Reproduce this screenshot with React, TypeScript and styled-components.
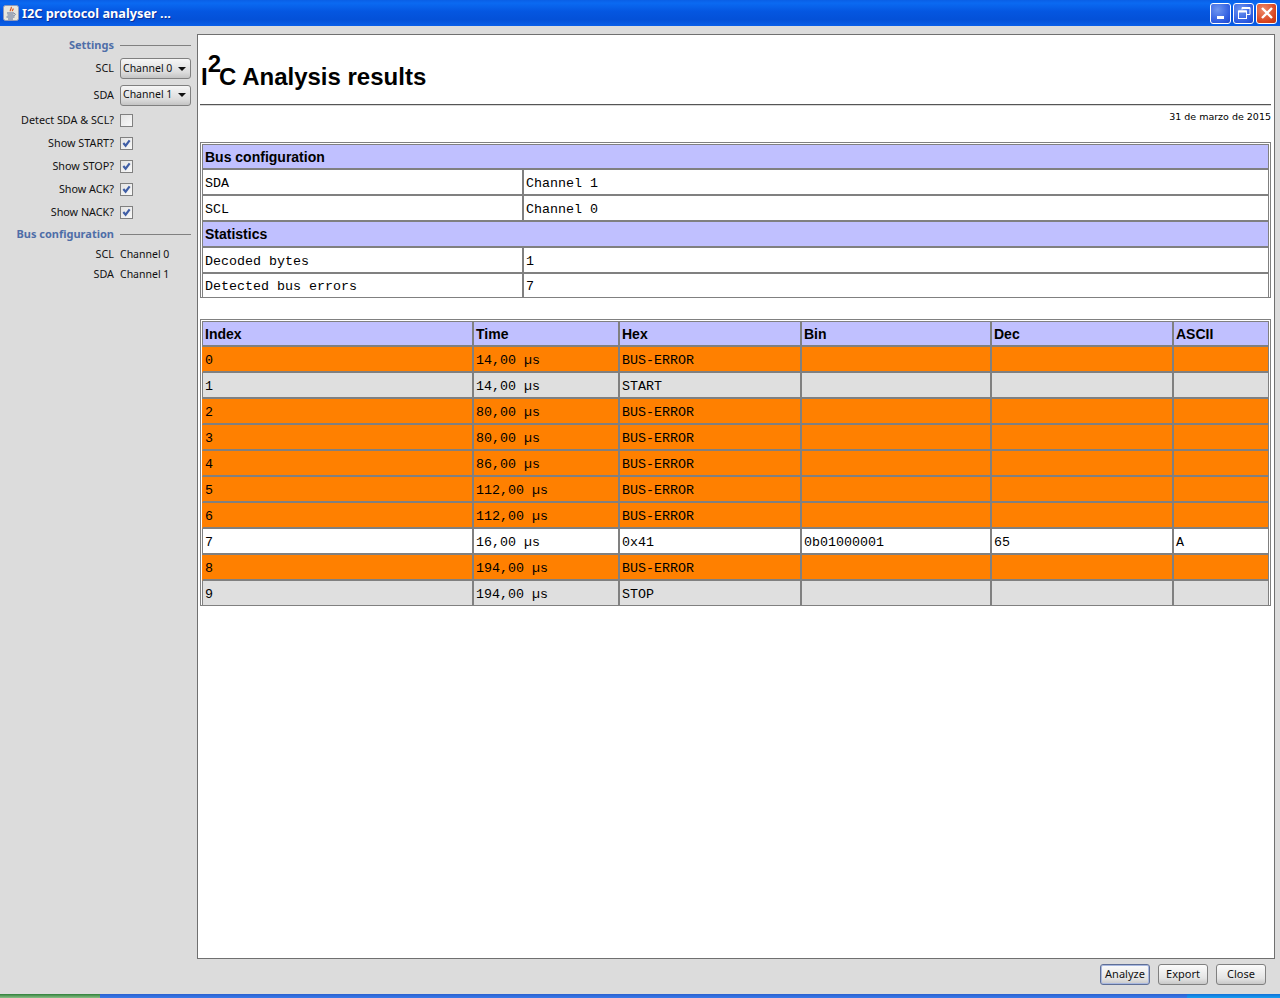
import React from "react"
import styled, { createGlobalStyle, css } from "styled-components"

const Global = createGlobalStyle`
  html, body {
    margin: 0;
    height: 100%;
    overflow: hidden;
    background: #dcdcdc;
  }
  #root {
    height: 100%;
  }
`

const busRows = [
  ["SDA", "Channel 1"],
  ["SCL", "Channel 0"],
]
const statRows = [
  ["Decoded bytes", "1"],
  ["Detected bus errors", "7"],
]
const columns = [
  { name: "Index", width: 272 },
  { name: "Time", width: 146 },
  { name: "Hex", width: 182 },
  { name: "Bin", width: 190 },
  { name: "Dec", width: 182 },
  { name: "ASCII", width: 95 },
]

type Kind = "error" | "event" | "data"
const rows: { kind: Kind; cells: string[] }[] = [
  { kind: "error", cells: ["0", "14,00 µs", "BUS-ERROR", "", "", ""] },
  { kind: "event", cells: ["1", "14,00 µs", "START", "", "", ""] },
  { kind: "error", cells: ["2", "80,00 µs", "BUS-ERROR", "", "", ""] },
  { kind: "error", cells: ["3", "80,00 µs", "BUS-ERROR", "", "", ""] },
  { kind: "error", cells: ["4", "86,00 µs", "BUS-ERROR", "", "", ""] },
  { kind: "error", cells: ["5", "112,00 µs", "BUS-ERROR", "", "", ""] },
  { kind: "error", cells: ["6", "112,00 µs", "BUS-ERROR", "", "", ""] },
  { kind: "data", cells: ["7", "16,00 µs", "0x41", "0b01000001", "65", "A"] },
  { kind: "error", cells: ["8", "194,00 µs", "BUS-ERROR", "", "", ""] },
  { kind: "event", cells: ["9", "194,00 µs", "STOP", "", "", ""] },
]

const rowColors: Record<Kind, string> = {
  error: "#ff8000",
  event: "#dfdfdf",
  data: "#ffffff",
}

const JavaIcon = () => (
  <svg width="16" height="16" viewBox="0 0 16 16">
    <rect x="0.5" y="0.5" width="15" height="15" rx="2" fill="#e8e6dc" stroke="#8f98b8" />
    <path d="M8 2c1.5 1.6-1.6 2.6-.6 4.2M10 3.5c.8 1-1.2 1.6-.6 2.8" fill="none" stroke="#d9541e" strokeWidth="1.2" />
    <path d="M4 8h7M4.5 10h6M3.5 12h8M5 14h5" stroke="#5a6f96" strokeWidth="1" />
    <path d="M11 8.5c2 0 2 2-.5 2" fill="none" stroke="#5a6f96" strokeWidth="0.8" />
  </svg>
)

const Check = () => (
  <svg width="9" height="9" viewBox="0 0 10 10">
    <path d="M1.5 4.5 4 7.5 8.5 1.5" fill="none" stroke="#3f5ea6" strokeWidth="2.4" />
  </svg>
)

const App: React.FC = () => {
  return (
    <>
      <Global />
      <S.Window>
        <S.TitleBar>
          <JavaIcon />
          <S.Title>I2C protocol analyser ...</S.Title>
          <S.WindowButtons>
            <S.WindowButton>
              <svg width="12" height="12" viewBox="0 0 12 12">
                <rect x="2" y="9" width="7" height="3" fill="#fff" />
              </svg>
            </S.WindowButton>
            <S.WindowButton>
              <svg width="14" height="14" viewBox="0 0 14 14" fill="none" stroke="#fff">
                <rect x="1.5" y="5" width="8" height="7.5" strokeWidth="1" />
                <path d="M1.5 5.5h8" strokeWidth="2" />
                <path d="M5 3.5V1.5h8v7h-3" strokeWidth="1" />
                <path d="M5 2h8" strokeWidth="2" />
              </svg>
            </S.WindowButton>
            <S.WindowButton $close>
              <svg width="14" height="14" viewBox="0 0 14 14">
                <path d="M2 2l10 10M12 2 2 12" stroke="#fff" strokeWidth="2.4" />
              </svg>
            </S.WindowButton>
          </S.WindowButtons>
        </S.TitleBar>

        <S.Main>
          <S.Sidebar>
            <S.SectionHead>
              <S.SectionLabel>Settings</S.SectionLabel>
              <S.SectionLine />
            </S.SectionHead>
            <S.Row $h={27}>
              <S.Label>SCL</S.Label>
              <S.Combo>Channel 0<S.Arrow /></S.Combo>
            </S.Row>
            <S.Row $h={26}>
              <S.Label>SDA</S.Label>
              <S.Combo>Channel 1<S.Arrow /></S.Combo>
            </S.Row>
            <S.Row $h={24}>
              <S.Label>Detect SDA &amp; SCL?</S.Label>
              <S.CheckBox />
            </S.Row>
            {["Show START?", "Show STOP?", "Show ACK?", "Show NACK?"].map((label) => (
              <S.Row $h={23} key={label}>
                <S.Label>{label}</S.Label>
                <S.CheckBox><Check /></S.CheckBox>
              </S.Row>
            ))}
            <S.SectionHead>
              <S.SectionLabel>Bus configuration</S.SectionLabel>
              <S.SectionLine />
            </S.SectionHead>
            <S.Row $h={20}>
              <S.Label>SCL</S.Label>
              <S.Value>Channel 0</S.Value>
            </S.Row>
            <S.Row $h={20}>
              <S.Label>SDA</S.Label>
              <S.Value>Channel 1</S.Value>
            </S.Row>
          </S.Sidebar>

          <S.Report>
            <S.Heading>I<S.Sup>2</S.Sup>C Analysis results</S.Heading>
            <S.Rule />
            <S.DateLine>31 de marzo de 2015</S.DateLine>

            <S.SummaryTable>
              <colgroup>
                <S.Col $w={322} />
                <S.Col $w={745} />
              </colgroup>
              <tbody>
                <tr><S.HeadCell colSpan={2}>Bus configuration</S.HeadCell></tr>
                {busRows.map(([name, value]) => (
                  <tr key={name}>
                    <S.Cell $bg="#ffffff">{name}</S.Cell>
                    <S.Cell $bg="#ffffff">{value}</S.Cell>
                  </tr>
                ))}
                <tr><S.HeadCell colSpan={2}>Statistics</S.HeadCell></tr>
                {statRows.map(([name, value]) => (
                  <tr key={name}>
                    <S.Cell $bg="#ffffff">{name}</S.Cell>
                    <S.Cell $bg="#ffffff">{value}</S.Cell>
                  </tr>
                ))}
              </tbody>
            </S.SummaryTable>

            <S.DataTable>
              <colgroup>
                {columns.map((c) => <S.Col key={c.name} $w={c.width} />)}
              </colgroup>
              <tbody>
                <tr>
                  {columns.map((c) => <S.HeadCell key={c.name}>{c.name}</S.HeadCell>)}
                </tr>
                {rows.map((r) => (
                  <tr key={r.cells[0]}>
                    {r.cells.map((text, i) => (
                      <S.Cell key={i} $bg={rowColors[r.kind]} $edge={r.kind === "error"}>{text}</S.Cell>
                    ))}
                  </tr>
                ))}
              </tbody>
            </S.DataTable>
          </S.Report>
        </S.Main>

        <S.Footer>
          <S.Button $focused>Analyze</S.Button>
          <S.Button>Export</S.Button>
          <S.Button>Close</S.Button>
        </S.Footer>

        <S.Taskbar>
          <S.StartButton />
          <S.TaskArea />
          <S.Tray />
        </S.Taskbar>
      </S.Window>
    </>
  )
}

const uiFont = `"Noto Sans", "DejaVu Sans", sans-serif`

const tableBase = css`
  width: 1071px;
  table-layout: fixed;
  border-collapse: separate;
  border-spacing: 0;
  border: 1px solid #808080;
  padding: 1px 1px 0;
  box-sizing: border-box;

  tr:first-child td {
    border-top: 1px solid #808080;
    padding-top: 1px;
    line-height: 22px;
  }
  tr:last-child td {
    border-bottom: 0;
  }
  td:last-child {
    border-right-width: 1px;
  }
`

const cellBase = css`
  padding: 1px 2px 0;
  border-right: 2px solid #808080;
  border-bottom: 2px solid #808080;
  color: #000;
  line-height: 23px;
  white-space: nowrap;
  overflow: hidden;
`

const S = {
  Window: styled.div`
    height: 100%;
    display: flex;
    flex-direction: column;
    background: #dcdcdc;
    font-family: ${uiFont};
    font-size: 10.5px;
    color: #111;
  `,
  TitleBar: styled.div`
    height: 26px;
    flex: none;
    display: flex;
    align-items: center;
    gap: 3px;
    padding: 0 3px;
    box-sizing: border-box;
    background: linear-gradient(#0a5fe6 0%, #0a6af2 12%, #0556e0 45%, #0451d8 75%, #0a5fe8 100%);
  `,
  Title: styled.div`
    flex: 1;
    color: #fff;
    font-family: "Noto Sans", sans-serif;
    font-weight: bold;
    font-size: 12.75px;
    text-shadow: 1px 1px 0 #0a2f9a;
  `,
  WindowButtons: styled.div`
    display: flex;
    gap: 2px;
  `,
  WindowButton: styled.div<{ $close?: boolean }>`
    width: 21px;
    height: 21px;
    box-sizing: border-box;
    display: flex;
    align-items: center;
    justify-content: center;
    border: 1px solid #fff;
    border-radius: 3px;
    background: ${(p) =>
      p.$close
        ? "radial-gradient(circle at 35% 30%, #ee8a6a, #d8421c 70%, #c03510)"
        : "radial-gradient(circle at 35% 30%, #6f96f0, #2d5be0 70%, #1f45c8)"};
  `,
  Main: styled.div`
    flex: 1;
    min-height: 0;
    display: flex;
    padding-top: 8px;
  `,
  Sidebar: styled.div`
    width: 197px;
    flex: none;
    padding-top: 1px;
    box-sizing: border-box;
  `,
  SectionHead: styled.div`
    height: 20px;
    display: grid;
    grid-template-columns: 114px 71px;
    column-gap: 6px;
    align-items: center;
  `,
  SectionLabel: styled.div`
    text-align: right;
    font-weight: bold;
    font-size: 11px;
    padding-bottom: 2px;
    color: #4f6ea8;
    white-space: nowrap;
  `,
  SectionLine: styled.div`
    height: 1px;
    background: #808080;
  `,
  Row: styled.div<{ $h: number }>`
    height: ${(p) => p.$h}px;
    display: grid;
    grid-template-columns: 114px 71px;
    column-gap: 6px;
    align-items: center;
  `,
  Label: styled.div`
    text-align: right;
    white-space: nowrap;
    font-size: 10.8px;
    padding-bottom: 2px;
  `,
  Value: styled.div`
    white-space: nowrap;
  `,
  Combo: styled.div`
    height: 21px;
    box-sizing: border-box;
    display: flex;
    align-items: center;
    justify-content: space-between;
    padding: 0 4px 2px 2px;
    border: 1px solid #808080;
    border-radius: 3px;
    background: linear-gradient(#f6f6f6, #dcdcdc 70%, #c4c4c4);
  `,
  Arrow: styled.span`
    width: 0;
    height: 0;
    margin-top: 2px;
    border-left: 4px solid transparent;
    border-right: 4px solid transparent;
    border-top: 4px solid #111;
  `,
  CheckBox: styled.div`
    width: 11px;
    height: 11px;
    display: flex;
    align-items: center;
    justify-content: center;
    border: 1px solid #808080;
    background: linear-gradient(135deg, #e4e4e4, #f8f8f8);
  `,
  Report: styled.div`
    flex: none;
    width: 1078px;
    box-sizing: border-box;
    padding: 0 0 0 2px;
    border: 1px solid #707070;
    background: #fff;
    overflow: hidden;
  `,
  Heading: styled.div`
    height: 69px;
    box-sizing: border-box;
    padding: 27px 0 0 1px;
    font-family: "Liberation Sans", Arial, sans-serif;
    font-weight: bold;
    font-size: 24px;
    line-height: 30px;
    color: #000;
    white-space: nowrap;
  `,
  Sup: styled.span`
    position: relative;
    top: -13px;
    margin-right: -2px;
  `,
  Rule: styled.div`
    width: 1071px;
    height: 2px;
    background: linear-gradient(#555 50%, #d8d8d8 50%);
  `,
  DateLine: styled.div`
    width: 1071px;
    height: 36px;
    box-sizing: border-box;
    padding-top: 5px;
    text-align: right;
    font-family: "DejaVu Sans", sans-serif;
    font-size: 9.5px;
    line-height: 12px;
    color: #000;
  `,
  SummaryTable: styled.table`
    ${tableBase}

    tr:last-child td {
      padding-top: 2px;
      line-height: 21px;
    }
  `,
  DataTable: styled.table`
    ${tableBase}
    margin-top: 21px;
  `,
  Col: styled.col<{ $w: number }>`
    width: ${(p) => p.$w}px;
  `,
  HeadCell: styled.td`
    ${cellBase}
    background: #c0c0ff;
    font-family: "Liberation Sans", Arial, sans-serif;
    font-weight: bold;
    font-size: 14px;

    &:first-child {
      border-left: 1px solid #808080;
    }
  `,
  Cell: styled.td<{ $bg: string; $edge?: boolean }>`
    ${cellBase}
    padding-top: 3px;
    line-height: 21px;
    background: ${(p) => p.$bg};
    font-family: "Liberation Mono", monospace;
    font-size: 13.33px;

    &:first-child {
      border-left: 1px solid ${(p) => (p.$edge ? p.$bg : "#808080")};
    }
  `,
  Footer: styled.div`
    height: 35px;
    flex: none;
    box-sizing: border-box;
    display: flex;
    justify-content: flex-end;
    gap: 8px;
    padding: 5px 14px 0 0;
  `,
  Button: styled.div<{ $focused?: boolean }>`
    width: 50px;
    height: 21px;
    box-sizing: border-box;
    display: flex;
    align-items: center;
    justify-content: center;
    padding-bottom: 3px;
    font-size: 11px;
    border: 1px solid ${(p) => (p.$focused ? "#5f6f96" : "#808080")};
    border-radius: 3px;
    background: linear-gradient(#fbfbfb, #e4e4e4 70%, #c8c8c8);
    box-shadow: ${(p) => (p.$focused ? "inset 0 0 0 1px #a8b8e0" : "none")};
  `,
  Taskbar: styled.div`
    height: 4px;
    flex: none;
    display: flex;
  `,
  StartButton: styled.div`
    width: 100px;
    background: linear-gradient(#2f7f3a, #8cc088);
  `,
  TaskArea: styled.div`
    flex: 1;
    background: linear-gradient(#2a60d0, #3a7ae8);
  `,
  Tray: styled.div`
    width: 93px;
    background: linear-gradient(#1070d8, #18a0f0);
  `,
}

export default App
